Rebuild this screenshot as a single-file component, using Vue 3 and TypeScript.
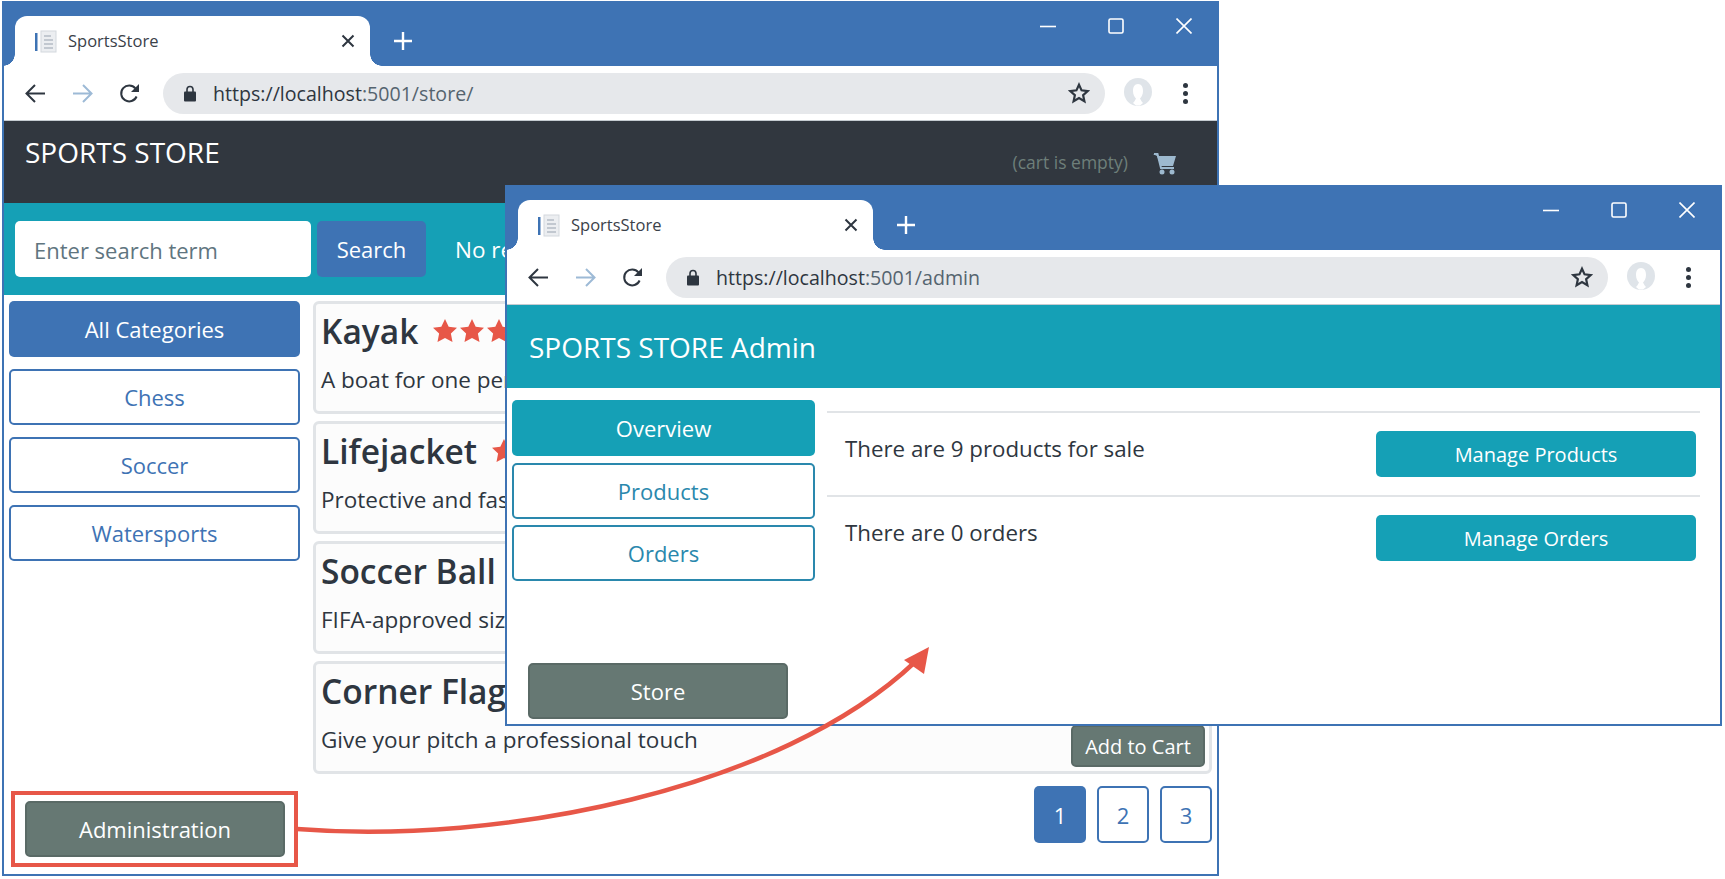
<script setup lang="ts">
  const windows = [
    { id: 'store', url: 'https://localhost', rest: ':5001/store/' },
    { id: 'admin', url: 'https://localhost', rest: ':5001/admin' },
  ]

  const categories = ['Chess', 'Soccer', 'Watersports']

  const products = [
    { name: 'Kayak', text: 'A boat for one person', stars: 5 },
    { name: 'Lifejacket', text: 'Protective and fashionable', stars: 5 },
    { name: 'Soccer Ball', text: 'FIFA-approved size and weight', stars: 0 },
    { name: 'Corner Flags', text: 'Give your pitch a professional touch', stars: 0 },
  ]

  const adminRows = [
    { text: 'There are 9 products for sale', action: 'Manage Products' },
    { text: 'There are 0 orders', action: 'Manage Orders' },
  ]
</script>

<template>
  <div class="desktop">
    <svg class="defs" aria-hidden="true">
      <symbol id="i-back" viewBox="0 0 21 21">
        <path d="M20 10.5H2M10 2l-8.5 8.5L10 19" fill="none" stroke="currentColor" stroke-width="2" />
      </symbol>
      <symbol id="i-forward" viewBox="0 0 21 21">
        <path d="M1 10.5h18M11 2l8.5 8.5L11 19" fill="none" stroke="currentColor" stroke-width="2" />
      </symbol>
      <symbol id="i-reload" viewBox="0 0 21 21">
        <path d="M17.6 13.5a8 8 0 1 1-1.2-8.2" fill="none" stroke="currentColor" stroke-width="2" />
        <path d="M20 1v8h-8z" fill="currentColor" />
      </symbol>
      <symbol id="i-lock" viewBox="0 0 12 17">
        <path d="M3 7V4.5a3 3 0 0 1 6 0V7" fill="none" stroke="currentColor" stroke-width="1.6" />
        <rect x="0" y="6.5" width="12" height="10" rx="1" fill="currentColor" />
      </symbol>
      <symbol id="i-star" viewBox="0 0 24 24">
        <path d="M12 3l2.8 6.1 6.7.8-5 4.5 1.4 6.6L12 17.6 6.100 21l1.400-6.600-5-4.500 6.700-.8z" fill="none" stroke="currentColor" stroke-width="2.400" />
      </symbol>
      <symbol id="i-avatar" viewBox="0 0 30 30">
        <circle cx="15" cy="14" r="14" fill="#dfe4e9" />
        <path d="M15 6c3.500 0 5 3 5 7 0 3.500-1.500 6-3 7.500 1 2 2 3.500 3 4.500l-3 2.500h-4l-3-2.500c1-1 2-2.500 3-4.500-1.500-1.500-3-4-3-7.500 0-4 1.500-7 5-7z" fill="#fff" />
      </symbol>
      <symbol id="i-favicon" viewBox="0 0 23 23">
        <rect x="7" y="1" width="15" height="21" fill="#eceef1" stroke="#d3d8dd" />
        <path d="M10 6h7M10 10h9M10 14h9M10 18h9" stroke="#b4bcc5" stroke-width="1.300" />
        <rect x="1" y="3" width="2.500" height="18" fill="#3e73b4" />
      </symbol>
      <symbol id="i-cart" viewBox="0 0 24 22">
        <path d="M0 1h4l1 2h18l-3 10H8L4 3" fill="currentColor" />
        <path d="M1 1h3.500L8 15h13" fill="none" stroke="currentColor" stroke-width="2" />
        <circle cx="9" cy="19" r="2.500" fill="currentColor" />
        <circle cx="19" cy="19" r="2.500" fill="currentColor" />
      </symbol>
      <symbol id="i-solid-star" viewBox="0 0 24 24">
        <path d="M12 0l3.700 7.700 8.300 1.100-6.100 5.800 1.600 8.400L12 19l-7.500 4 1.600-8.400L0 8.800l8.300-1.100z" fill="currentColor" />
      </symbol>
    </svg>

    <section v-for="win in windows" :key="win.id" class="window" :class="`window--${win.id}`">
      <div class="strip">
        <div class="tab">
          <svg class="favicon"><use href="#i-favicon" /></svg>
          <span class="tab-title">SportsStore</span>
          <svg class="tab-close" viewBox="0 0 14 14">
            <path d="M1.500 1.500l11 11M12.500 1.500l-11 11" stroke="currentColor" stroke-width="2" />
          </svg>
        </div>
        <svg class="new-tab" viewBox="0 0 18 18">
          <path d="M9 0v18M0 9h18" stroke="#fff" stroke-width="2.400" />
        </svg>
        <div class="controls">
          <svg viewBox="0 0 16 16"><path d="M0 8.500h16" stroke="#fff" stroke-width="1.600" /></svg>
          <svg viewBox="0 0 16 16"><rect x="1" y="1" width="14" height="14" rx="1.500" fill="none" stroke="#fff" stroke-width="1.600" /></svg>
          <svg viewBox="0 0 16 16"><path d="M.5.500l15 15M15.500.500l-15 15" stroke="#fff" stroke-width="1.600" /></svg>
        </div>
      </div>

      <div class="toolbar">
        <svg class="tool"><use href="#i-back" /></svg>
        <svg class="tool tool--dim"><use href="#i-forward" /></svg>
        <svg class="tool"><use href="#i-reload" /></svg>
        <div class="address">
          <svg class="lock"><use href="#i-lock" /></svg>
          <span class="url">{{ win.url }}<span class="url-rest">{{ win.rest }}</span></span>
          <svg class="star"><use href="#i-star" /></svg>
        </div>
        <svg class="avatar"><use href="#i-avatar" /></svg>
        <div class="dots"><i /><i /><i /></div>
      </div>

      <template v-if="win.id === 'store'">
        <header class="store-head">
          <span class="brand">SPORTS STORE</span>
          <span class="cart-text">(cart is empty)</span>
          <svg class="cart"><use href="#i-cart" /></svg>
        </header>
        <div class="search-bar">
          <div class="search-input">Enter search term</div>
          <button class="btn btn--blue search-btn">Search</button>
          <span class="search-note">No results</span>
        </div>
        <div class="page">
          <aside class="side">
            <button class="btn btn--blue side-btn">All Categories</button>
            <button v-for="c in categories" :key="c" class="btn btn--outline side-btn">{{ c }}</button>
            <button class="btn btn--gray admin-btn">Administration</button>
          </aside>
          <main class="catalog">
            <article v-for="p in products" :key="p.name" class="card">
              <div class="card-head">
                <h2>{{ p.name }}</h2>
                <svg v-for="n in p.stars" :key="n" class="rating"><use href="#i-solid-star" /></svg>
              </div>
              <div class="card-row">
                <p>{{ p.text }}</p>
                <button v-if="p.name === 'Corner Flags'" class="btn btn--gray cart-btn">Add to Cart</button>
              </div>
            </article>
            <nav class="pager">
              <button class="btn btn--blue pager-btn">1</button>
              <button class="btn btn--outline pager-btn">2</button>
              <button class="btn btn--outline pager-btn">3</button>
            </nav>
          </main>
        </div>
      </template>

      <template v-else>
        <header class="admin-head">SPORTS STORE Admin</header>
        <div class="page">
          <aside class="side side--admin">
            <button class="btn btn--teal side-btn">Overview</button>
            <button class="btn btn--outline-teal side-btn">Products</button>
            <button class="btn btn--outline-teal side-btn">Orders</button>
            <button class="btn btn--gray admin-btn">Store</button>
          </aside>
          <main class="overview">
            <div v-for="row in adminRows" :key="row.action" class="overview-row">
              <span>{{ row.text }}</span>
              <button class="btn btn--teal manage-btn">{{ row.action }}</button>
            </div>
          </main>
        </div>
      </template>
    </section>

    <svg class="annotation" viewBox="0 0 1725 879" aria-hidden="true">
      <rect x="13" y="793" width="283" height="72" fill="none" stroke="#e75748" stroke-width="4" />
      <path d="M297 829C500 845 780 790 915 662" fill="none" stroke="#e75748" stroke-width="4.500" />
      <path d="M904 660L929 647L924 674Z" fill="#e75748" />
    </svg>
  </div>
</template>

<style scoped>
  .desktop {
    position: relative;
    width: 1725px;
    height: 879px;
    overflow: hidden;
    background: #fff;
    font-family: "Open Sans", "Noto Sans", sans-serif;
    color: #2e3640;
  }

  .defs {
    position: absolute;
    width: 0;
    height: 0;
  }

  .window {
    position: absolute;
    display: flex;
    flex-direction: column;
    box-sizing: border-box;
    border: 2px solid #3e73b4;
    background: #fff;
    overflow: hidden;
  }

  .window--store {
    left: 2px;
    top: 1px;
    width: 1217px;
    height: 875px;
  }

  .window--admin {
    left: 505px;
    top: 185px;
    width: 1217px;
    height: 541px;
  }

  .strip {
    display: flex;
    align-items: flex-end;
    flex: none;
    height: 63px;
    background: #3e73b4;
  }

  .tab {
    position: relative;
    display: flex;
    align-items: center;
    box-sizing: border-box;
    width: 355px;
    height: 50px;
    margin-left: 11px;
    padding: 0 15px 0 19px;
    background: #fff;
    border-radius: 12px 12px 0 0;
  }

  .tab::before,
  .tab::after {
    content: '';
    position: absolute;
    bottom: 0;
    width: 12px;
    height: 12px;
  }

  .tab::before {
    left: -12px;
    background: radial-gradient(circle at 0 0, transparent 11.5px, #fff 12px);
  }

  .tab::after {
    right: -12px;
    background: radial-gradient(circle at 100% 0, transparent 11.5px, #fff 12px);
  }

  .favicon {
    width: 23px;
    height: 23px;
  }

  .tab-title {
    margin: 0 0 2px 11px;
    font-size: 16.500px;
    color: #3a4149;
  }

  .tab-close {
    width: 14px;
    height: 14px;
    margin-left: auto;
    color: #2e3640;
  }

  .new-tab {
    width: 18px;
    height: 18px;
    margin: 0 0 16px 24px;
  }

  .controls {
    display: flex;
    gap: 52px;
    align-self: flex-start;
    margin: 15px 25px 0 auto;
  }

  .controls svg {
    width: 16px;
    height: 16px;
  }

  .toolbar {
    display: flex;
    align-items: center;
    flex: none;
    box-sizing: border-box;
    height: 55px;
    padding-left: 21px;
    border-bottom: 1px solid #c5cbd1;
    color: #2e3640;
  }

  .tool {
    width: 21px;
    height: 21px;
    margin-right: 26px;
  }

  .tool--dim {
    color: #9dbad6;
  }

  .tool:nth-of-type(3) {
    margin-right: 23px;
  }

  .address {
    display: flex;
    align-items: center;
    box-sizing: border-box;
    width: 942px;
    height: 41px;
    padding: 0 15px 0 21px;
    border-radius: 21px;
    background: #e6e8eb;
  }

  .lock {
    width: 12px;
    height: 17px;
    color: #2e3640;
  }

  .url {
    margin-left: 17px;
    font-size: 19.600px;
    color: #2e3640;
  }

  .url-rest {
    color: #55646f;
  }

  .star {
    width: 22px;
    height: 22px;
    margin-left: auto;
    color: #2e3640;
  }

  .avatar {
    width: 30px;
    height: 30px;
    margin-left: 18px;
  }

  .dots {
    display: flex;
    flex-direction: column;
    gap: 3px;
    margin-left: 30px;
  }

  .dots i {
    width: 5px;
    height: 5px;
    border-radius: 50%;
    background: #2e3640;
  }

  .store-head {
    position: relative;
    display: flex;
    flex: none;
    box-sizing: border-box;
    height: 82px;
    padding: 12px 0 0 21px;
    background: #31373f;
    color: #fff;
  }

  .brand {
    font-size: 28px;
    line-height: 38px;
  }

  .cart-text {
    margin: 16px 0 0 auto;
    font-size: 17.500px;
    line-height: 26px;
    color: #6e7f7a;
  }

  .cart {
    width: 24px;
    height: 22px;
    margin: 20px 40px 0 25px;
    color: #9db9cf;
  }

  .search-bar {
    display: flex;
    align-items: center;
    flex: none;
    height: 92px;
    padding-left: 11px;
    background: #15a0b6;
  }

  .search-input {
    display: flex;
    align-items: center;
    box-sizing: border-box;
    width: 296px;
    height: 56px;
    padding: 1px 0 0 19px;
    border-radius: 5px;
    background: #fff;
    font-size: 22px;
    color: #5f7580;
  }

  .search-btn {
    width: 109px;
    height: 56px;
    margin-left: 6px;
  }

  .search-note {
    margin-left: 29px;
    font-size: 22.500px;
    color: #fff;
  }

  .btn {
    box-sizing: border-box;
    padding: 0;
    border: 2px solid transparent;
    border-radius: 5px;
    background: none;
    font-family: inherit;
    font-size: 22px;
  }

  .btn--blue {
    background: #3e73b4;
    color: #fff;
  }

  .btn--teal {
    background: #15a0b6;
    color: #fff;
  }

  .btn--gray {
    background: #667873;
    border-color: #5a6a66;
    color: #fff;
  }

  .btn--outline {
    border-color: #3e73b4;
    color: #3e73b4;
  }

  .btn--outline-teal {
    border-color: #2a88ad;
    color: #2a88ad;
  }

  .page {
    display: flex;
    flex: 1;
    min-height: 0;
  }

  .side {
    display: flex;
    flex-direction: column;
    gap: 12px;
    flex: none;
    box-sizing: border-box;
    width: 296px;
    padding: 6px 0 17px 5px;
  }

  .side-btn {
    flex: none;
    height: 56px;
  }

  .admin-btn {
    flex: none;
    width: 260px;
    height: 56px;
    margin: auto 0 0 16px;
  }

  .catalog {
    display: flex;
    flex-direction: column;
    gap: 7px;
    box-sizing: border-box;
    width: 899px;
    margin-left: 13px;
    padding-top: 6px;
  }

  .card {
    box-sizing: border-box;
    height: 113px;
    padding: 3px 4px 0 5px;
    border: 3px solid #e1e4e7;
    border-radius: 6px;
    background: #fcfcfc;
  }

  .card-head {
    display: flex;
    align-items: center;
    height: 48px;
    margin-bottom: 10px;
  }

  .card-head h2 {
    margin: 0 15px 0 0;
    font-size: 33.500px;
    font-weight: 600;
    line-height: 48px;
  }

  .rating {
    width: 24px;
    height: 24px;
    margin-right: 3px;
    color: #e75748;
  }

  .card-row {
    display: flex;
    justify-content: space-between;
    align-items: flex-start;
  }

  .card-row p {
    margin: 0;
    font-size: 22.500px;
    line-height: 30px;
  }

  .cart-btn {
    width: 134px;
    height: 42px;
    font-size: 20px;
  }

  .pager {
    display: flex;
    justify-content: flex-end;
    gap: 11px;
    margin-top: 5px;
  }

  .pager-btn {
    width: 52px;
    height: 57px;
  }

  .side--admin {
    gap: 6.500px;
    width: 308px;
    padding: 12px 0 5px 5px;
  }

  .admin-head {
    display: flex;
    align-items: center;
    flex: none;
    box-sizing: border-box;
    height: 83px;
    padding-left: 22px;
    background: #15a0b6;
    font-size: 28px;
    color: #fff;
  }

  .overview {
    flex: none;
    box-sizing: border-box;
    width: 873px;
    margin-left: 12px;
    padding-top: 23px;
  }

  .overview-row {
    display: flex;
    justify-content: space-between;
    align-items: flex-start;
    box-sizing: border-box;
    height: 84px;
    padding: 18px 4px 0 18px;
    border-top: 2px solid #e1e4e7;
  }

  .overview-row span {
    margin-top: 3px;
    font-size: 22.300px;
    line-height: 30px;
  }

  .manage-btn {
    width: 320px;
    height: 46px;
    padding-top: 1px;
    font-size: 20px;
  }

  .annotation {
    position: absolute;
    inset: 0;
    width: 1725px;
    height: 879px;
    pointer-events: none;
  }
</style>

<style>
  html,
  body {
    margin: 0;
    background: #fff;
  }
</style>
